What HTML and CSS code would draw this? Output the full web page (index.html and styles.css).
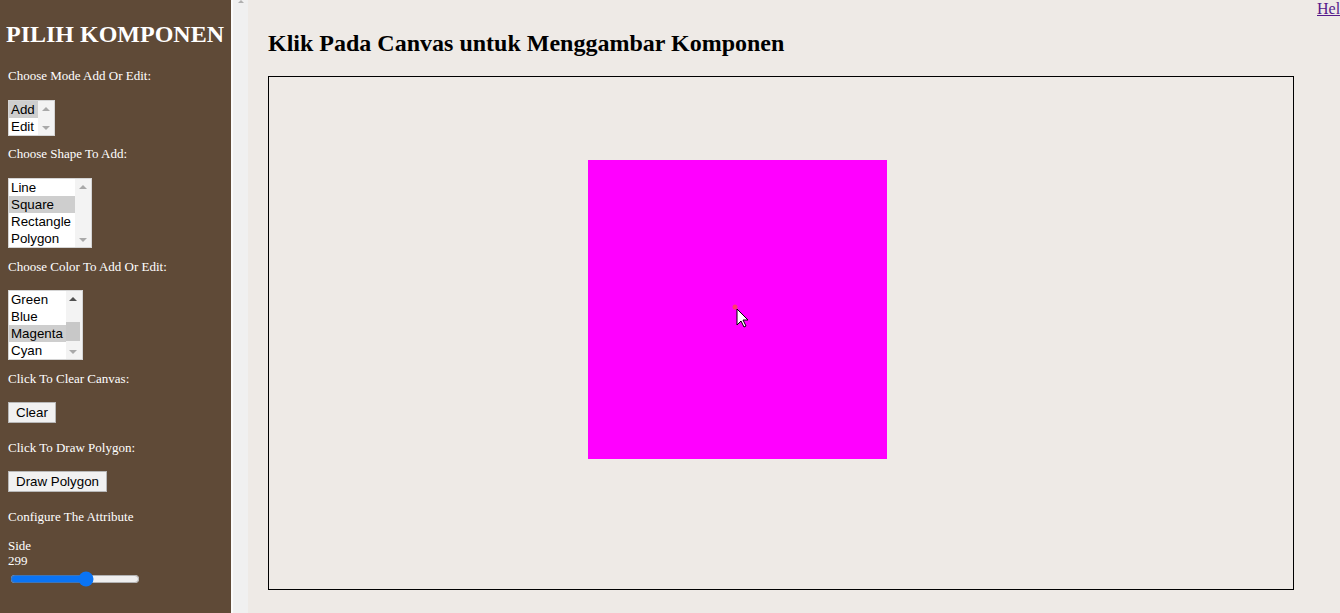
FILE: index.html
```html
<!DOCTYPE html>
<html lang="id">
<head>
<meta charset="utf-8">
<title>Pilih Komponen</title>
<link rel="stylesheet" href="styles.css">
</head>
<body>
<aside class="sidebar">
  <h1 class="title">PILIH KOMPONEN</h1>
  <p class="label l1">Choose Mode Add Or Edit:</p>
  <div class="listbox lb-mode" role="listbox">
    <div class="opts">
      <div class="opt sel">Add</div>
      <div class="opt">Edit</div>
    </div>
    <div class="sb"><span class="up"></span><span class="down"></span></div>
  </div>
  <p class="label l2 first">Choose Shape To Add:</p>
  <div class="listbox lb-shape" role="listbox">
    <div class="opts">
      <div class="opt">Line</div>
      <div class="opt sel">Square</div>
      <div class="opt">Rectangle</div>
      <div class="opt">Polygon</div>
    </div>
    <div class="sb"><span class="up"></span><span class="down"></span></div>
  </div>
  <p class="label l2">Choose Color To Add Or Edit:</p>
  <div class="listbox lb-color" role="listbox">
    <div class="opts">
      <div class="opt">Green</div>
      <div class="opt">Blue</div>
      <div class="opt sel">Magenta</div>
      <div class="opt">Cyan</div>
    </div>
    <div class="sb sb-color"><span class="up dark"></span><span class="thumb"></span><span class="down"></span></div>
  </div>
  <p class="label l2">Click To Clear Canvas:</p>
  <button class="btn">Clear</button>
  <p class="label l3">Click To Draw Polygon:</p>
  <button class="btn">Draw Polygon</button>
  <p class="label l3">Configure The Attribute</p>
  <p class="label l4">Side</p>
  <p class="label l5">299</p>
  <input class="range" type="range" min="0" max="500" value="299">
</aside>
<div class="strip"><span class="strip-up"></span></div>
<main class="main">
  <nav class="topnav"><a href="#" class="help">Help</a></nav>
  <h2 class="heading">Klik Pada Canvas untuk Menggambar Komponen</h2>
  <div class="canvas">
    <svg width="1024" height="512" viewBox="0 0 1024 512">
      <rect x="319" y="83" width="299" height="299" fill="#ff00ff"/>
      <circle cx="466" cy="230" r="2.5" fill="#ff3b6b"/>
      <polygon points="468,232 468,248 472,244 475,250 477,249 474,243 479,243" fill="#ffffff" stroke="#000000" stroke-width="1" stroke-linejoin="round"/>
    </svg>
  </div>
</main>
</body>
</html>
```
FILE: styles.css
```css
html, body {
  margin: 0;
  padding: 0;
}
body {
  display: flex;
  width: 1340px;
  height: 613px;
  overflow: hidden;
  background: #eeeae6;
}
.sidebar {
  width: 231px;
  flex: none;
  background: #5f4a37;
  color: #ffffff;
  font-family: "Liberation Serif", "Times New Roman", serif;
  display: flex;
  flex-direction: column;
  align-items: flex-start;
  padding-left: 8px;
  box-sizing: border-box;
}
.title {
  margin: 20px 0 0 -2px;
  font-size: 24px;
  line-height: 28px;
  font-weight: bold;
  white-space: nowrap;
}
.label {
  margin: 11px 0 0;
  font-size: 13px;
  line-height: 15px;
  white-space: nowrap;
}
.l1 { margin-top: 20px; }
.l2.first { margin-top: 10px; }
.l3 { margin-top: 17px; }
.l4 { margin-top: 14px; }
.l5 { margin-top: 0; }
.listbox {
  margin-top: 16px;
  display: flex;
  background: #ffffff;
  border: 1px solid #d4d4d4;
  font-family: "Liberation Sans", Arial, sans-serif;
  font-size: 13.33px;
  color: #000000;
}
.lb-mode { margin-top: 17px; }
.lb-shape { margin-top: 17px; }
.lb-mode .opts { width: 29px; }
.lb-shape .opts { width: 66px; }
.lb-color .opts { width: 57px; }
.opt {
  height: 17px;
  line-height: 17px;
  padding-left: 2px;
  white-space: nowrap;
}
.opt.sel { background: #cecece; }
.sb {
  width: 16px;
  background: #f3f3f3;
  display: flex;
  flex-direction: column;
  align-items: center;
  justify-content: space-between;
  padding: 6px 0 5px;
  box-sizing: border-box;
}
.up, .down {
  width: 0;
  height: 0;
  border-left: 4px solid transparent;
  border-right: 4px solid transparent;
}
.up { border-bottom: 4px solid #a9a9a9; }
.down { border-top: 4px solid #a9a9a9; }
.up.dark { border-bottom-color: #505050; }
.sb-color { padding-right: 2px; }
.thumb {
  width: 14px;
  height: 19px;
  background: #c8c8c8;
  margin-top: 13px;
  margin-bottom: 1px;
}
.btn {
  margin-top: 16px;
  height: 21px;
  padding: 0 7px;
  background: #f1f1f1;
  border: 1px solid #b8b8b8;
  border-radius: 0;
  font-family: "Liberation Sans", Arial, sans-serif;
  font-size: 13.33px;
  color: #000000;
}
.range {
  margin: 3px 0 0 2px;
  width: 130px;
  height: 16px;
  accent-color: #0a74f5;
}
.strip {
  width: 17px;
  flex: none;
  background: #f0f0f0;
  border-left: 2px solid #fbfbfb;
  box-sizing: border-box;
  display: flex;
  justify-content: center;
}
.strip-up {
  width: 0;
  height: 0;
  border-left: 3px solid transparent;
  border-right: 3px solid transparent;
  border-bottom: 3px solid #b0b0b0;
}
.main {
  flex: none;
  width: 1100px;
  padding-left: 20px;
  box-sizing: border-box;
  font-family: "Liberation Serif", "Times New Roman", serif;
}
.topnav {
  height: 18px;
  padding-left: 1049px;
}
.help {
  font-size: 16px;
  line-height: 18px;
  color: #551a8b;
}
.heading {
  margin: 11px 0 0;
  font-size: 24px;
  line-height: 28px;
  font-weight: bold;
  color: #000000;
}
.canvas {
  margin-top: 19px;
  width: 1024px;
  height: 512px;
  border: 1px solid #000000;
}
.canvas svg {
  display: block;
}
```
